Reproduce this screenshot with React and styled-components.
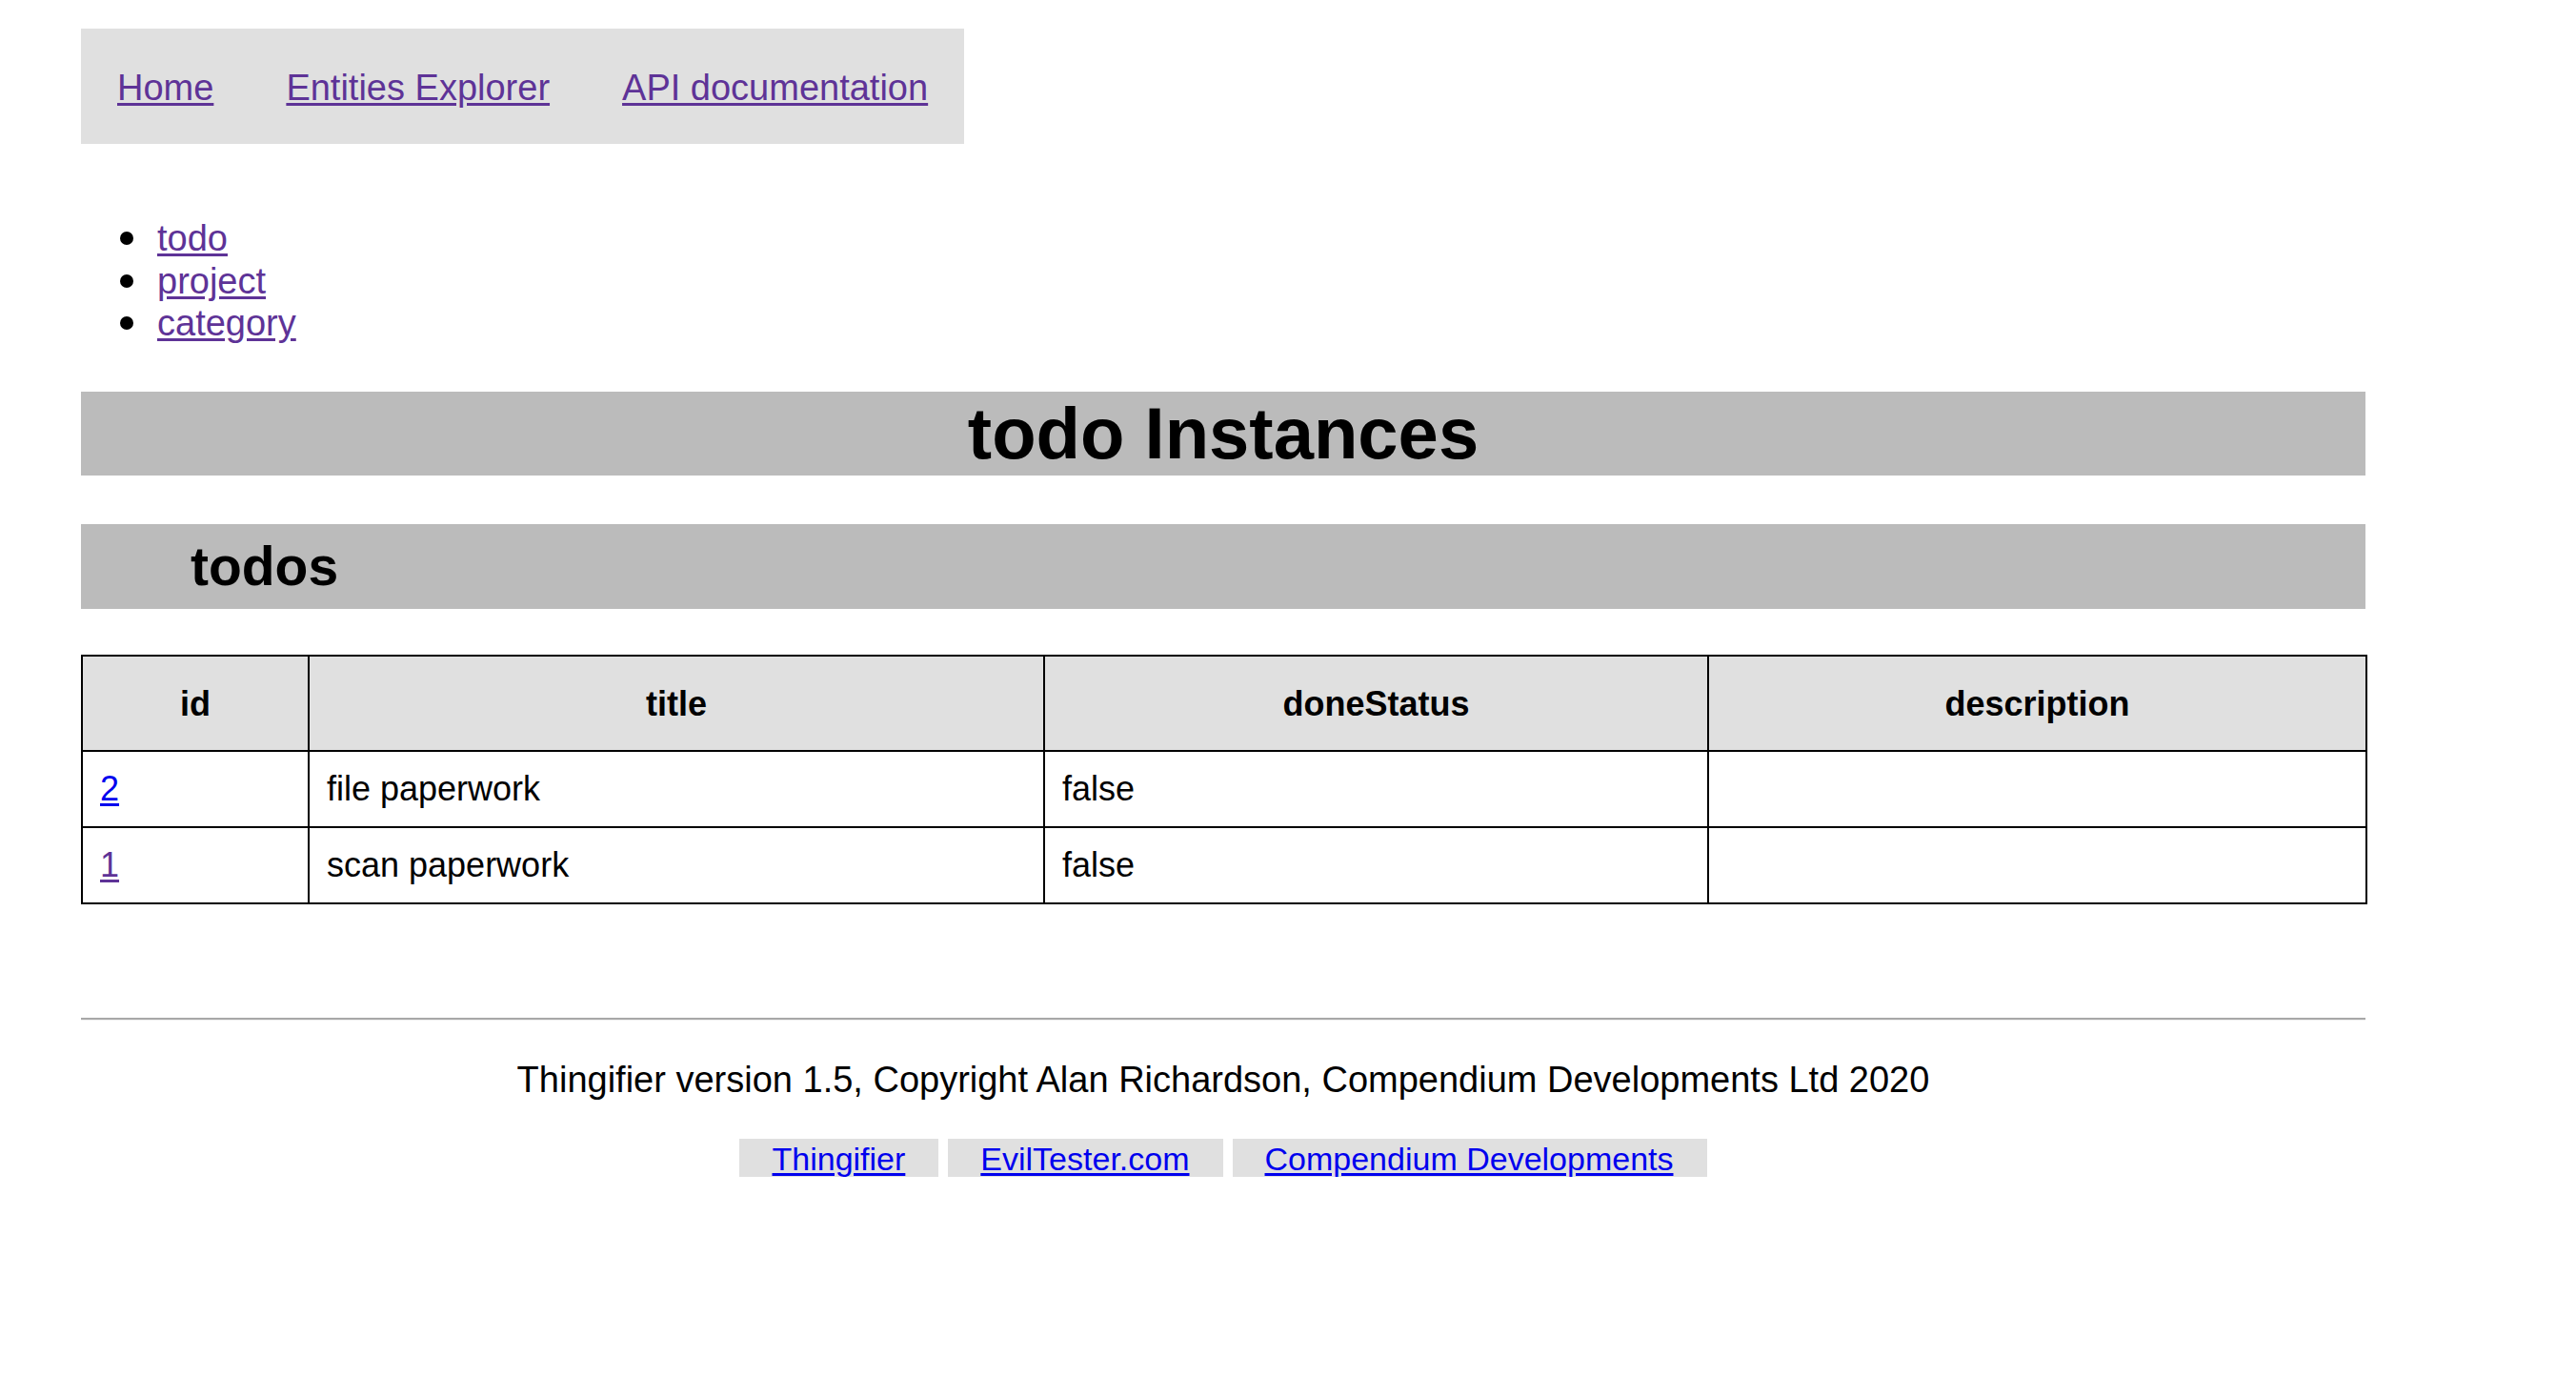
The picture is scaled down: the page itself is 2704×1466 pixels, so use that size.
import styled, { createGlobalStyle } from "styled-components";

const GlobalStyle = createGlobalStyle`
    html, body {
        margin: 0;
        padding: 0;
        background: #ffffff;
    }
    body {
        font-family: "Liberation Sans", Arial, Helvetica, sans-serif;
        color: #000000;
    }
`;

const Page = styled.div`
    width: 2398px;
    padding: 30px 0 120px 85px;
`;

const Nav = styled.nav`
    box-sizing: border-box;
    display: inline-flex;
    align-items: center;
    gap: 76px;
    height: 121px;
    padding: 3px 38px 0 38px;
    background: #e0e0e0;
    font-size: 38px;
`;

const Link = styled.a`
    color: ${({ $visited }) => ($visited ? "#5e3397" : "#0000ee")};
    text-decoration: underline;
    text-underline-offset: 3px;
    cursor: pointer;
`;

const EntityList = styled.ul`
    list-style: none;
    margin: 77px 0 0;
    padding: 0 0 0 41px;
    font-size: 38px;
    line-height: 44.5px;
`;

const EntityItem = styled.li`
    display: flex;
    align-items: center;

    &::before {
        content: "";
        width: 14px;
        height: 14px;
        border-radius: 50%;
        background: #000000;
        margin-right: 25px;
    }
`;

const Title = styled.h1`
    margin: 49.5px 0 0;
    background: #bbbbbb;
    font-size: 76px;
    font-weight: bold;
    line-height: 88px;
    text-align: center;
`;

const SubTitle = styled.h2`
    margin: 51px 0 0;
    padding-left: 115px;
    background: #bbbbbb;
    font-size: 57px;
    font-weight: bold;
    line-height: 89px;
`;

const Table = styled.table`
    width: 2398px;
    margin-top: 48px;
    border-collapse: collapse;
    table-layout: fixed;
    border: 2px solid #000000;
    font-size: 36px;
`;

const Th = styled.th`
    background: #e0e0e0;
    border: 2px solid #000000;
    padding: 29px 18px 27px;
    line-height: 42px;
    font-weight: bold;
    text-align: center;
`;

const Td = styled.td`
    border: 2px solid #000000;
    padding: 18px;
    line-height: 42px;
    text-align: left;
`;

const Rule = styled.hr`
    margin: 119px 0 0;
    height: 0;
    border: none;
    border-top: 2px solid #a8a8a8;
    border-bottom: 1px solid #eeeeee;
`;

const Footer = styled.footer`
    text-align: center;
`;

const Copyright = styled.p`
    margin: 40px 0 0;
    font-size: 38px;
    line-height: 44px;
`;

const FooterLinks = styled.div`
    display: flex;
    justify-content: center;
    gap: 10px;
    margin-top: 40px;
`;

const FooterLink = styled(Link)`
    display: inline-block;
    height: 40px;
    padding: 0 35px 0 34px;
    background: #e0e0e0;
    font-size: 34px;
    line-height: 42px;
`;

const columns = [
    { key: "id", width: 238 },
    { key: "title", width: 772 },
    { key: "doneStatus", width: 697 },
    { key: "description", width: 691 },
];

const todos = [
    { id: "2", title: "file paperwork", doneStatus: "false", description: "", visited: false },
    { id: "1", title: "scan paperwork", doneStatus: "false", description: "", visited: true },
];

const App = () => {
    return (
        <>
            <GlobalStyle />
            <Page>
                <Nav>
                    <Link $visited>Home</Link>
                    <Link $visited>Entities Explorer</Link>
                    <Link $visited>API documentation</Link>
                </Nav>

                <EntityList>
                    {["todo", "project", "category"].map(name => (
                        <EntityItem key={name}>
                            <Link $visited>{name}</Link>
                        </EntityItem>
                    ))}
                </EntityList>

                <Title>todo Instances</Title>
                <SubTitle>todos</SubTitle>

                <Table>
                    <colgroup>
                        {columns.map(col => (
                            <col key={col.key} style={{ width: col.width }} />
                        ))}
                    </colgroup>
                    <thead>
                        <tr>
                            {columns.map(col => (
                                <Th key={col.key}>{col.key}</Th>
                            ))}
                        </tr>
                    </thead>
                    <tbody>
                        {todos.map(todo => (
                            <tr key={todo.id}>
                                <Td>
                                    <Link $visited={todo.visited}>{todo.id}</Link>
                                </Td>
                                <Td>{todo.title}</Td>
                                <Td>{todo.doneStatus}</Td>
                                <Td>{todo.description}</Td>
                            </tr>
                        ))}
                    </tbody>
                </Table>

                <Rule />

                <Footer>
                    <Copyright>
                        Thingifier version 1.5, Copyright Alan Richardson, Compendium Developments Ltd 2020
                    </Copyright>
                    <FooterLinks>
                        <FooterLink>Thingifier</FooterLink>
                        <FooterLink>EvilTester.com</FooterLink>
                        <FooterLink>Compendium Developments</FooterLink>
                    </FooterLinks>
                </Footer>
            </Page>
        </>
    )
}

export default App
